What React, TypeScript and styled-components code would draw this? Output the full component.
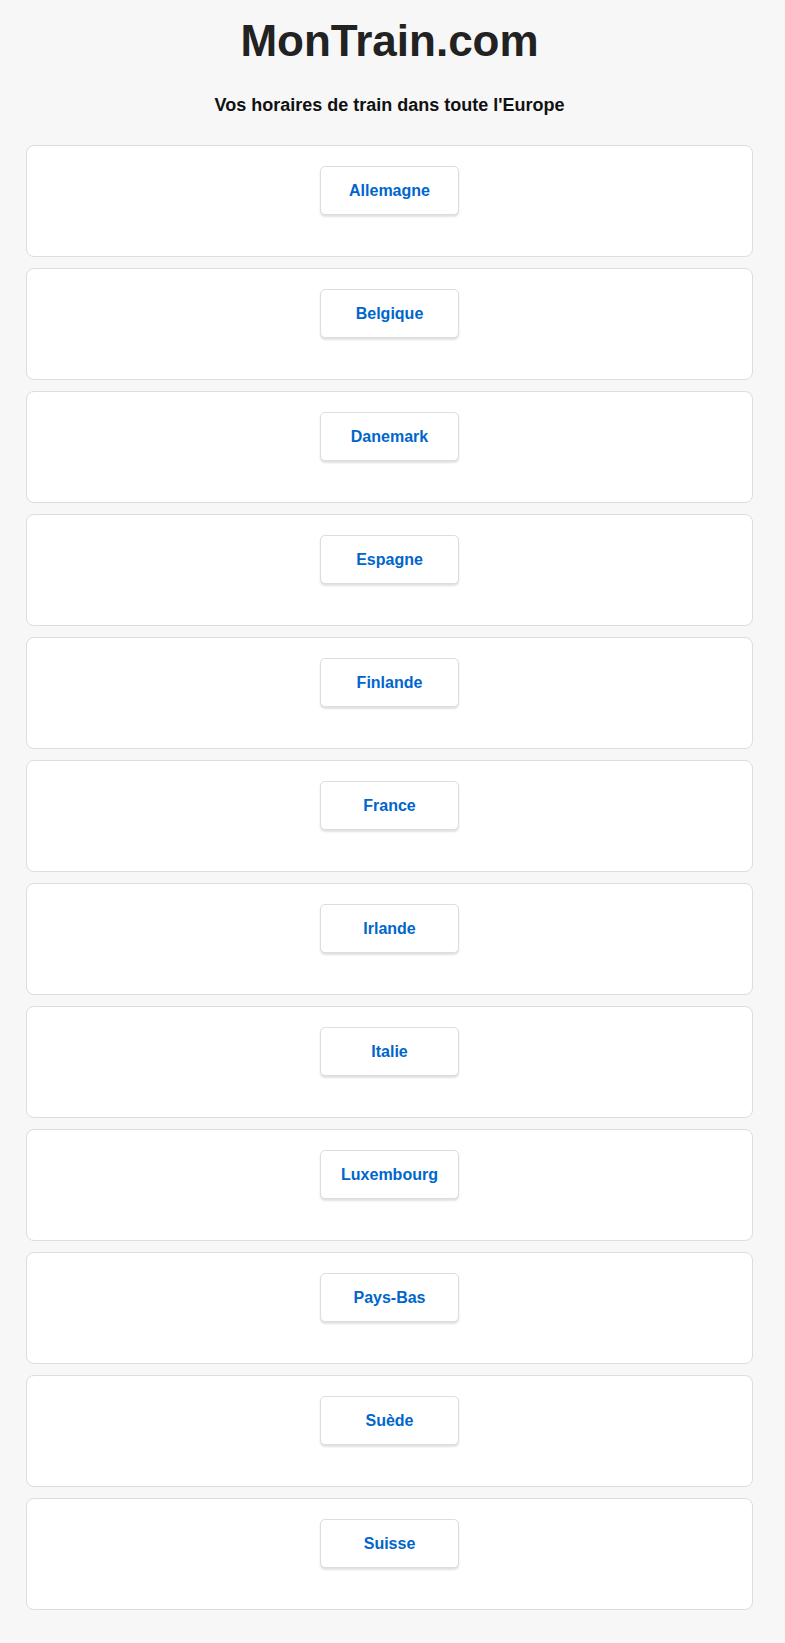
import styled, { createGlobalStyle } from 'styled-components';

const GlobalStyle = createGlobalStyle`
  body {
    margin: 0;
    background: #f7f7f7;
    font-family: "Liberation Sans", Arial, sans-serif;
  }
`;

const Page = styled.div`
  padding: 16px 32px 33px 26px;
`;

const Title = styled.h1`
  margin: 0 0 29px;
  font-size: 44px;
  line-height: 50px;
  font-weight: bold;
  color: #222;
  text-align: center;
`;

const Subtitle = styled.h2`
  margin: 0 0 29px;
  font-size: 18px;
  line-height: 21px;
  font-weight: bold;
  color: #111;
  text-align: center;
`;

const CountryList = styled.div`
  display: flex;
  flex-direction: column;
  gap: 11px;
`;

const Card = styled.div`
  background: #fff;
  border: 1px solid #ddd;
  border-radius: 8px;
  padding: 20px 20px 41px;
  display: flex;
  justify-content: center;
`;

const CountryButton = styled.a`
  box-sizing: border-box;
  width: 139px;
  height: 49px;
  padding-top: 1px;
  display: flex;
  align-items: center;
  justify-content: center;
  background: #fff;
  border: 1px solid #ddd;
  border-radius: 5px;
  box-shadow: 0 2px 2px rgba(0, 0, 0, 0.12);
  color: #0066cc;
  font-size: 16px;
  font-weight: bold;
  text-decoration: none;
  cursor: pointer;
`;

const countries = [
  'Allemagne',
  'Belgique',
  'Danemark',
  'Espagne',
  'Finlande',
  'France',
  'Irlande',
  'Italie',
  'Luxembourg',
  'Pays-Bas',
  'Suède',
  'Suisse',
];

export default function App() {
  return (
    <>
      <GlobalStyle />
      <Page>
        <Title>MonTrain.com</Title>
        <Subtitle>Vos horaires de train dans toute l'Europe</Subtitle>
        <CountryList>
          {countries.map((name) => (
            <Card key={name}>
              <CountryButton>{name}</CountryButton>
            </Card>
          ))}
        </CountryList>
      </Page>
    </>
  );
}
